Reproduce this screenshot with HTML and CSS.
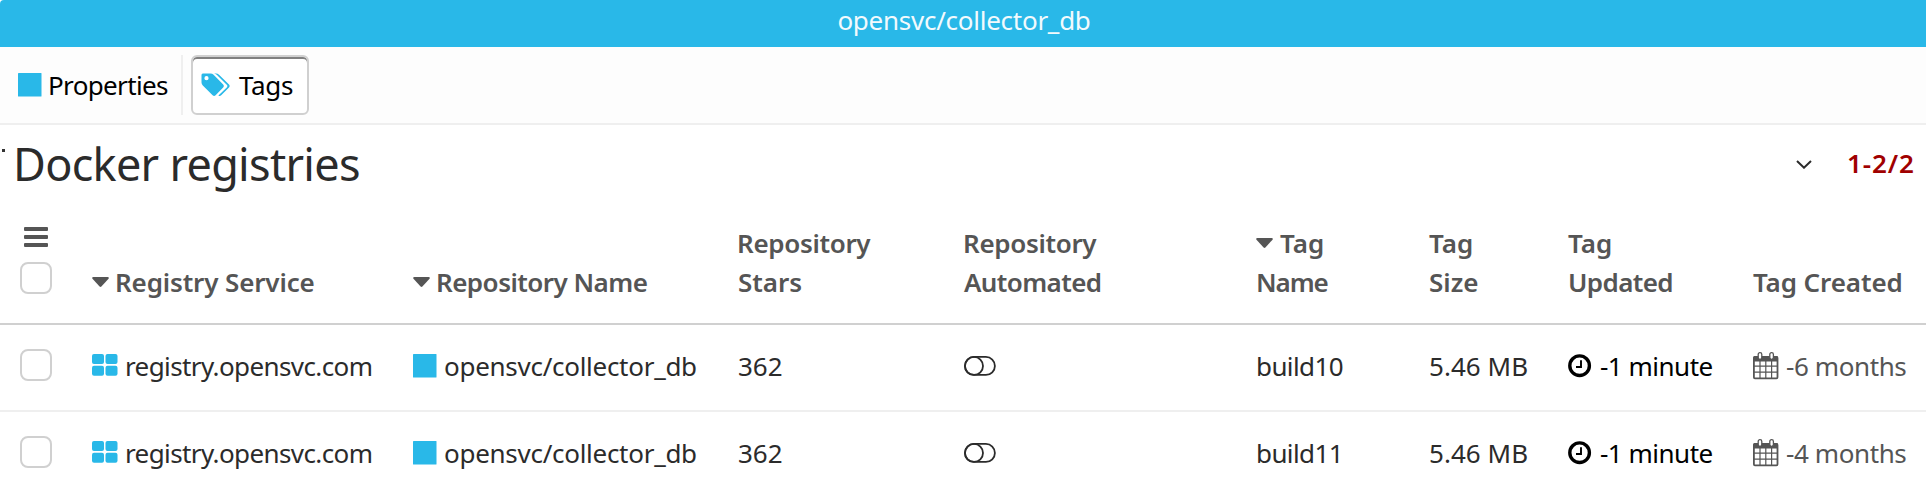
FILE: index.html
```html
<!DOCTYPE html>
<html lang="en">
<head>
<meta charset="utf-8">
<title>opensvc/collector_db</title>
<link rel="stylesheet" href="styles.css">
</head>
<body>
<svg class="defs" aria-hidden="true">
  <symbol id="square" viewBox="0 0 24 24"><rect x="0" y="0" width="23.5" height="23.5" rx=".6"/></symbol>
  <symbol id="grid" viewBox="0 0 26 22"><rect width="12" height="10" rx="2"/><rect x="13.5" width="12" height="10" rx="2"/><rect y="11.7" width="12" height="10" rx="2"/><rect x="13.5" y="11.7" width="12" height="10" rx="2"/></symbol>
  <symbol id="caret" viewBox="0 0 17 11"><path d="M1.3 0H15.7Q17.6.4 16.3 2L9.4 9.5Q8.5 10.4 7.6 9.5L.7 2Q-.6.4 1.3 0Z"/></symbol>
  <symbol id="toggle" viewBox="0 0 32 20"><g fill="none" stroke="currentColor" stroke-width="1.8"><rect x=".9" y=".9" width="30" height="18" rx="9"/><circle cx="10" cy="9.9" r="9"/></g></symbol>
  <symbol id="clock" viewBox="0 0 24 24"><g fill="none" stroke="currentColor"><circle cx="11.6" cy="11.7" r="9.8" stroke-width="3.4"/><path d="M13 6.2V13H8" stroke-width="1.9"/></g></symbol>
  <symbol id="calendar" viewBox="0 0 26 28"><g fill="none" stroke="currentColor"><rect x=".9" y="4.9" width="23.6" height="21.4" rx="1" stroke-width="1.8"/><path d="M7 9V26M12.8 9V26M18.6 9V26M1 14.2H24.5M1 20.2H24.5" stroke-width="1.2"/></g><path d="M1.5 4H24L25 5V9.6H.3V5Z"/><g fill="#fff" stroke="currentColor" stroke-width="1.3"><rect x="5.2" y=".7" width="3.6" height="6.6" rx="1.7"/><rect x="16.8" y=".7" width="3.6" height="6.6" rx="1.7"/></g></symbol>
</svg>
<header class="titlebar">opensvc/collector_db</header>
<nav class="toolbar">
  <div class="tab tab-properties"><svg class="ico-square"><use href="#square"/></svg><span class="t-prop">Properties</span></div>
  <div class="tab tab-active">
    <svg class="ico-tags" viewBox="0 0 29 24"><path fill-rule="evenodd" d="M1.8.4H9.5Q11.3.4 12.6 1.7L22.2 11.4Q23.7 13 22.2 14.5L14.6 22.2Q13.1 23.6 11.6 22.2L1.8 12.4Q.5 11.1.5 9.4V2Q.5.6 1.8.4ZM5.5 3.1A2.1 2.1 0 1 0 5.5 7.3 2.1 2.1 0 1 0 5.5 3.1Z"/><path d="M13 .4H15Q16.8.4 18 1.7L28 11.5Q29.3 13 28 14.4L20.2 22.2Q18.8 23.5 17.4 22.4L26 14.3Q26.8 13 26 12L16 2Q14.6.7 13 .4Z"/></svg>
    <span class="t-tags">Tags</span>
  </div>
</nav>
<section class="heading">
  <span class="speck"></span>
  <h1>Docker registries</h1>
  <svg class="ico-chevron" viewBox="0 0 16 9"><path d="M1 1L8 7.7L15 1" fill="none" stroke="currentColor" stroke-width="2"/></svg>
  <span class="pager">1-2/2</span>
</section>
<main class="table">
  <div class="row head">
    <div class="select"><span class="menu"><i></i><i></i><i></i></span><span class="checkbox"></span></div>
    <div><svg class="ico-caret"><use href="#caret"/></svg><span class="h-service">Registry Service</span></div>
    <div><svg class="ico-caret"><use href="#caret"/></svg><span class="h-reponame">Repository Name</span></div>
    <div class="c-stars"><span class="h-repo">Repository</span><br><span>Stars</span></div>
    <div><span class="h-repo">Repository</span><br><span class="h-auto">Automated</span></div>
    <div><svg class="ico-caret"><use href="#caret"/></svg><span>Tag</span><br><span class="h-name">Name</span></div>
    <div><span>Tag</span><br><span>Size</span></div>
    <div><span>Tag</span><br><span class="h-updated">Updated</span></div>
    <div class="h-created">Tag Created</div>
  </div>
  <div class="row">
    <div class="select"><span class="checkbox"></span></div>
    <div><svg class="ico-grid"><use href="#grid"/></svg><span class="c-service">registry.opensvc.com</span></div>
    <div><svg class="ico-square"><use href="#square"/></svg><span class="c-repo">opensvc/collector_db</span></div>
    <div><span>362</span></div>
    <div><svg class="ico-toggle"><use href="#toggle"/></svg></div>
    <div class="c-tag">build10</div>
    <div class="c-size">5.46 MB</div>
    <div class="recent"><svg class="ico-clock"><use href="#clock"/></svg><span>-1 minute</span></div>
    <div class="old"><svg class="ico-calendar"><use href="#calendar"/></svg><span>-6 months</span></div>
  </div>
  <div class="row">
    <div class="select"><span class="checkbox"></span></div>
    <div><svg class="ico-grid"><use href="#grid"/></svg><span class="c-service">registry.opensvc.com</span></div>
    <div><svg class="ico-square"><use href="#square"/></svg><span class="c-repo">opensvc/collector_db</span></div>
    <div><span>362</span></div>
    <div><svg class="ico-toggle"><use href="#toggle"/></svg></div>
    <div class="c-tag">build11</div>
    <div class="c-size">5.46 MB</div>
    <div class="recent"><svg class="ico-clock"><use href="#clock"/></svg><span>-1 minute</span></div>
    <div class="old"><svg class="ico-calendar"><use href="#calendar"/></svg><span>-4 months</span></div>
  </div>
</main>
</body>
</html>
```
FILE: styles.css
```css
* { box-sizing: border-box; }
body { margin: 0; height: 496px; overflow: hidden; background: #fff; color: #2b2b2b; font: 26px/39px "Noto Sans", sans-serif; }
.defs { display: none; }
svg { flex: none; fill: currentColor; }
.titlebar { height: 47px; padding-top: 1px; padding-left: 2px; border-top-left-radius: 4px; background: #29b8e8; color: #f2fafd; text-align: center; letter-spacing: -.26px; }
.toolbar { display: flex; height: 78px; padding: 8px 8px 0 18px; border-bottom: 2px solid #efefef; background: #fdfdfd; color: #000; }
.tab { display: flex; align-items: center; height: 60px; }
.tab-properties { width: 165px; border-right: 2px solid #efefef; }
.tab-active { width: 118px; margin-left: 8px; padding-left: 8px; border: 2px solid #d0d0d0; border-radius: 6px; background: #fff; box-shadow: inset 0 2px 0 #808080; }
.ico-square { width: 24px; height: 24px; color: #29b8e8; }
.t-prop { margin-left: 6px; letter-spacing: -.65px; }
.ico-tags { width: 29px; height: 24px; color: #29b8e8; }
.t-tags { margin-left: 9px; letter-spacing: -.3px; }
.heading { display: flex; align-items: center; height: 83px; padding-bottom: 4px; }
.speck { width: 3px; height: 3px; margin: 0 8px 29px 2px; background: #333; }
h1 { margin: -2px 0 0; font-size: 45px; font-weight: 400; line-height: 60px; letter-spacing: -.7px; }
.ico-chevron { width: 16px; height: 9px; margin-left: auto; }
.pager { width: 69px; margin: -2px 10px 0 35px; color: #a00000; font-weight: 600; letter-spacing: .9px; }
.row { display: grid; grid-template-columns: 72px 321px 325px 225px 293px 173px 139px 185px 173px; height: 87px; padding: 22px 0 0 20px; border-bottom: 2px solid #efefef; white-space: nowrap; }
.head { height: 117px; align-items: end; padding: 0 0 21px 20px; border-color: #d0d0d0; color: #555; font-weight: 600; }
.select { display: flex; flex-direction: column; }
.checkbox { width: 32px; height: 32px; margin-top: 2px; border: 2px solid #d0d0d0; border-radius: 8px; }
.menu { display: flex; flex-direction: column; gap: 4px; width: 24px; margin: 0 0 13px 4px; }
.menu i { height: 4px; border-radius: 1px; background: #555; }
.head .checkbox { margin-bottom: 8px; }
.ico-caret { width: 17px; height: 11px; margin-right: 7px; vertical-align: 4px; }
.h-service { margin-left: -1px; letter-spacing: -.14px; }
.h-reponame { margin-left: -1px; letter-spacing: -.53px; }
.h-repo { letter-spacing: -.33px; }
.c-stars .h-repo { margin-left: -1px; }
.h-auto { margin-left: 1px; letter-spacing: -.6px; }
.h-name { letter-spacing: -1.1px; }
.h-updated { letter-spacing: -.6px; }
.h-created { letter-spacing: -.1px; }
.ico-grid { width: 26px; height: 22px; margin-right: 7px; color: #29b8e8; }
.row .ico-square { margin-right: 7px; vertical-align: -2px; }
.c-service { letter-spacing: -.6px; }
.c-repo { letter-spacing: -.28px; }
.c-tag { letter-spacing: -.6px; }
.c-size { letter-spacing: .05px; }
.ico-toggle { width: 32px; height: 20px; margin-left: 1px; }
.ico-clock { width: 24px; height: 24px; margin-right: 8px; vertical-align: -2px; }
.ico-calendar { width: 26px; height: 28px; margin-right: 7px; vertical-align: -4px; }
.recent { color: #000; letter-spacing: -.5px; }
.old { color: #555; letter-spacing: -.4px; }
```
